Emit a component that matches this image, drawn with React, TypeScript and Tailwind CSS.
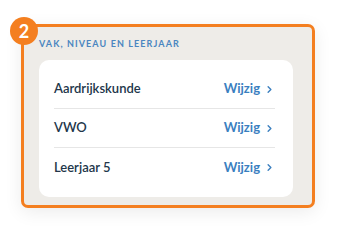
import { ChevronRight } from 'lucide-react';

const ROWS = ['Aardrijkskunde', 'VWO', 'Leerjaar 5'];

export default function App() {
  return (
    <div className="w-[342px] h-[230px] bg-white pt-[24px] pl-[21px] font-['Lato',sans-serif]">
      <div className="relative w-[294px] h-[184px] rounded-[7px] border-[3px] border-[#f47f20] bg-[#eeece8] shadow-[0_4px_18px_rgba(0,0,0,0.08)]">
        {/* badge */}
        <div className="absolute left-[-14px] top-[-10px] w-[28px] h-[28px] rounded-full bg-[#f47f20] flex items-center justify-center text-white text-[18px] font-bold leading-none">
          2
        </div>

        <div className="pl-[15px] pt-[12px] text-[9px] font-bold tracking-[1.1px] text-[#4a86c0] leading-[10px]">
          VAK, NIVEAU EN LEERJAAR
        </div>

        <div className="ml-[15px] mt-[11px] w-[254px] rounded-[10px] bg-white pl-[15px] pr-[18px] py-[10px]">
          {ROWS.map((label, i) => (
            <div
              key={label}
              className={`flex items-center justify-between h-[39px] ${i < ROWS.length - 1 ? 'border-b border-[#e6e6e6]' : ''}`}
            >
              <span className="text-[13px] font-semibold text-[#22364a]">{label}</span>
              <span className="flex items-center gap-[4px] text-[13px] font-bold text-[#3b7fbf]">
                Wijzig
                <ChevronRight size={11} strokeWidth={3} />
              </span>
            </div>
          ))}
        </div>
      </div>
    </div>
  );
}
